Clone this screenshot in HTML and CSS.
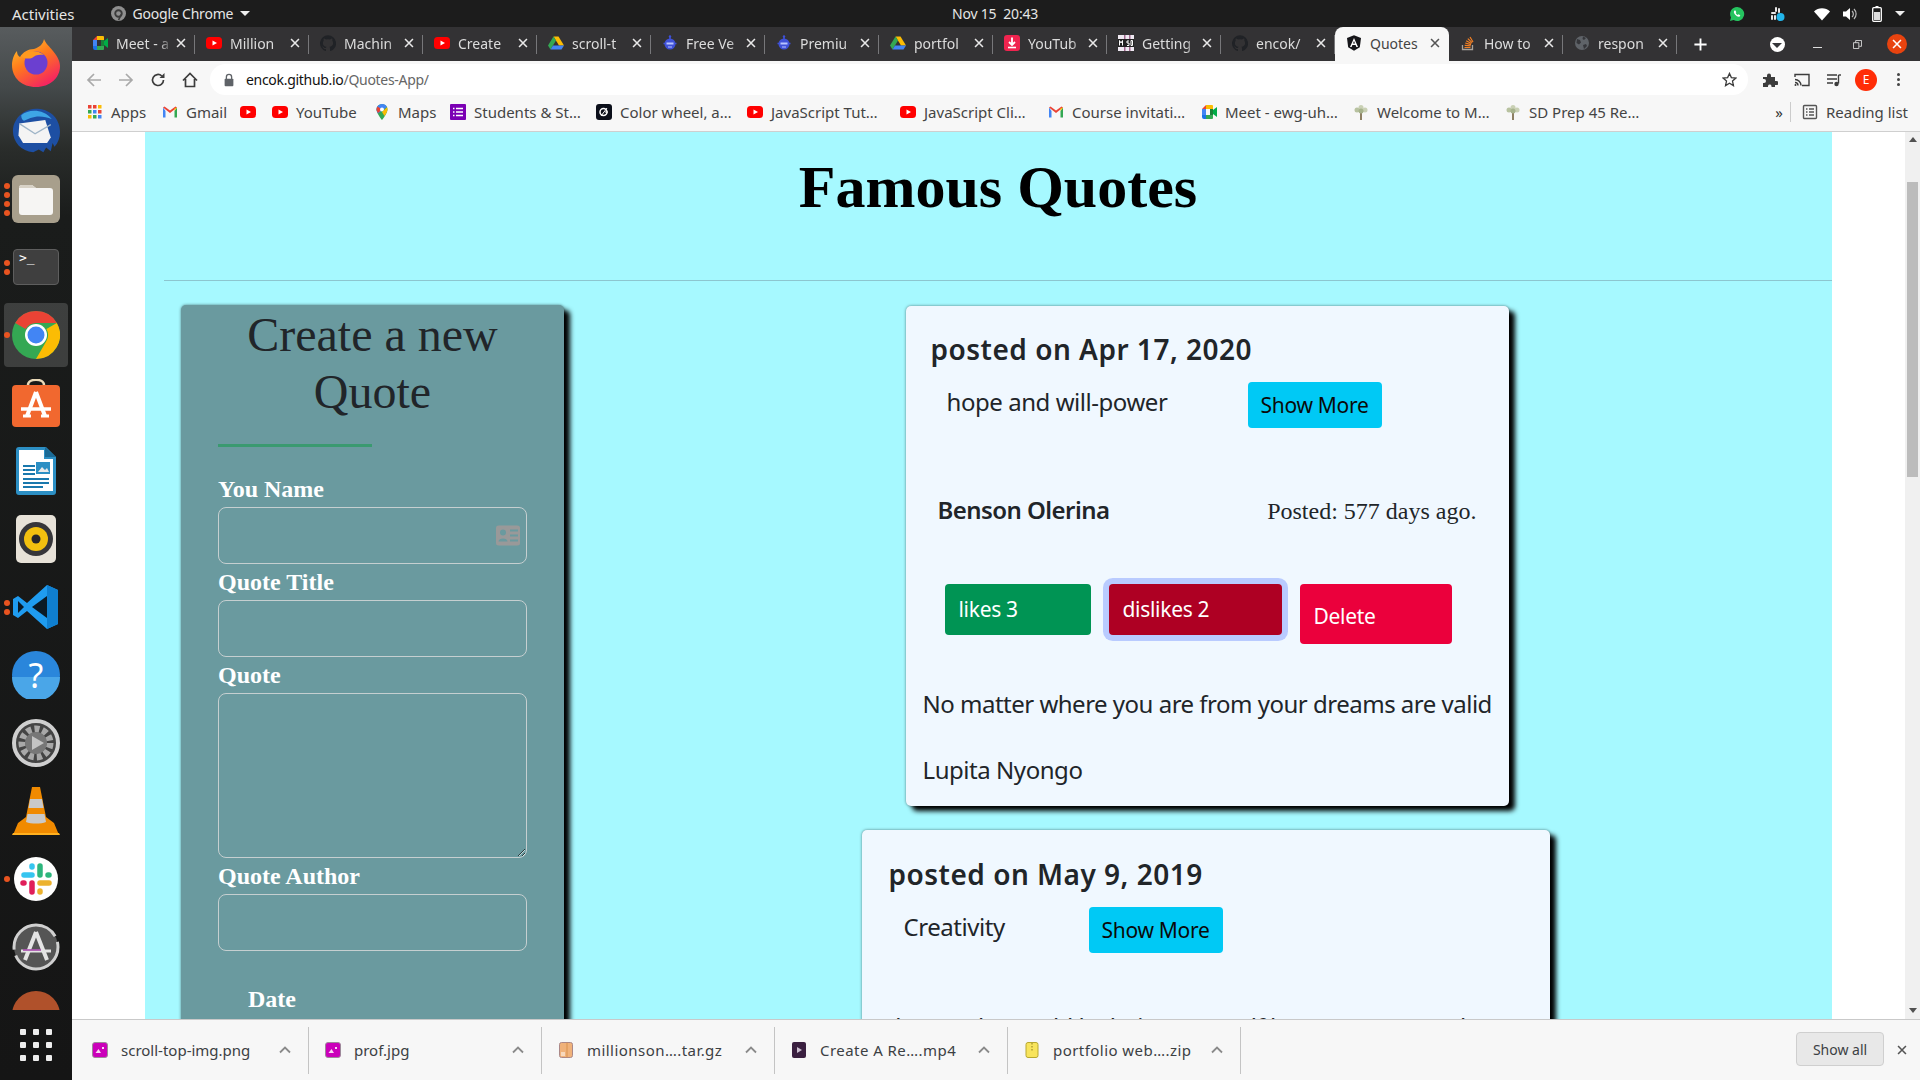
FILE: index.html
```html
<!doctype html>
<html lang="en">
<head>
    <meta charset="UTF-8">
    <title>Quotes</title>
    <link rel="stylesheet" href="styles.css">
</head>
<body>
<svg class="defs" width="0" height="0">
    <symbol id="i-x" viewBox="0 0 16 16"><path d="M3.5 3.5l9 9M12.5 3.5l-9 9" fill="none" stroke="currentColor" stroke-width="1.8"/></symbol>
    <symbol id="i-yt" viewBox="0 0 16 16"><rect x="0" y="2" width="16" height="12" rx="3.5" fill="#f00"/><path d="M6.5 5.5v5L11 8z" fill="#fff"/></symbol>
    <symbol id="i-meet" viewBox="0 0 16 16"><path d="M1 5l4-4v4z" fill="#ea4335"/><path d="M1 5h4v6H1z" fill="#4285f4"/><path d="M1 11h4v4H3a2 2 0 0 1-2-2z" fill="#1a73e8"/><path d="M5 1h6a1 1 0 0 1 1 1v3H5z" fill="#fbbc04"/><path d="M5 11h7v3a1 1 0 0 1-1 1H5z" fill="#34a853"/><path d="M12 6l4-3v10l-4-3z" fill="#00ac47"/><path d="M9 5h3v6H9z" fill="#188038"/></symbol>
    <symbol id="i-gh" viewBox="0 0 16 16"><path d="M8 .3a8 8 0 0 0-2.5 15.6c.4.1.5-.2.5-.4v-1.4c-2.2.5-2.7-1-2.7-1-.4-.9-.9-1.200-.9-1.200-.7-.5.100-.5.100-.5.800.100 1.200.8 1.200.8.700 1.200 1.900.9 2.300.7.100-.5.300-.9.500-1.100-1.800-.2-3.600-.9-3.600-4 0-.9.300-1.600.8-2.100-.1-.2-.4-1 .1-2.100 0 0 .7-.2 2.200.8a7.600 7.600 0 0 1 4 0c1.500-1 2.200-.8 2.200-.8.400 1.100.200 1.900.100 2.100.5.500.8 1.200.8 2.100 0 3.100-1.900 3.800-3.700 4 .3.200.6.700.6 1.500v2.200c0 .2.100.5.600.4A8 8 0 0 0 8 .3z" fill="#202226"/></symbol>
    <symbol id="i-drive" viewBox="0 0 16 16"><path d="M5.500 1.500h5L16 10.500h-5z" fill="#fbbc04"/><path d="M5.500 1.500L0 10.500l2.500 4L8 5.500z" fill="#34a853"/><path d="M2.500 14.500h11l2.500-4H5z" fill="#4285f4"/></symbol>
    <symbol id="i-bot" viewBox="0 0 16 16"><circle cx="8" cy="9" r="5.500" fill="#3f51d8"/><path d="M8 1v3M1.500 8.500h1.500M13 8.500h1.500" stroke="#3f51d8" stroke-width="1.500"/><circle cx="8" cy="1.500" r="1.200" fill="#3f51d8"/><path d="M4.500 7.500h7v2h-7z" fill="#b9c4ff"/><path d="M6 12h4" stroke="#b9c4ff"/></symbol>
    <symbol id="i-dl" viewBox="0 0 16 16"><rect width="16" height="16" rx="3" fill="#f0244f"/><path d="M8 2.500v7M5 7l3 3 3-3" fill="none" stroke="#fff" stroke-width="1.800"/><path d="M4 12.500h8" stroke="#fff" stroke-width="1.600"/></symbol>
    <symbol id="i-msd" viewBox="0 0 16 16"><rect width="16" height="16" fill="#efe9f2"/><path d="M6 0h1.500v16H6zM11 0h1.500v16H11z" fill="#a2688e"/><path d="M0 4h16v8H0z" fill="#222"/><path d="M1.500 10.500V5.500L3 8l1.500-2.500v5M11 6H9v2h2v2.500H9M13 5.500h1.500v5H13z" fill="none" stroke="#fff"/></symbol>
    <symbol id="i-ng" viewBox="0 0 16 16"><path d="M8 .3L1 3l1.200 9.200L8 15.700l5.800-3.500L15 3z" fill="#16161a"/><path d="M8 3L4 12h1.600l.8-2.100h3.200l.8 2.100H12zM7 8.500l1-2.500 1 2.500z" fill="#fff"/></symbol>
    <symbol id="i-so" viewBox="0 0 16 16"><path d="M2.500 10v4.500h10V10" fill="none" stroke="#a8a29a" stroke-width="1.300"/><path d="M4.500 12.500h6M4.700 10.300l6 .5M5.200 8l5.800 1.600M6.200 5.700l5.200 2.900M7.800 3.600l4.300 4M10 2l3 5" stroke="#f48024" stroke-width="1.200" fill="none"/></symbol>
    <symbol id="i-globe" viewBox="0 0 16 16"><circle cx="8" cy="8" r="7" fill="#5f6368"/><path d="M3 4l3 1 1 2.500-2 2-2.500-1.500zM9 10l3-1 1 2-3 3zM9 1.500l3 1.500-2 2-1.500-1z" fill="#35363a"/></symbol>
    <symbol id="i-gm" viewBox="0 0 16 16"><path d="M1 3.500v10h2.500V7z" fill="#4285f4"/><path d="M12.500 7v6.500H15v-10z" fill="#34a853"/><path d="M1 3.500L8 9l7-5.500-1.500-1L8 6.500 2.500 2.500z" fill="#ea4335"/><path d="M12.500 4.200L15 3.500 12.500 7z" fill="#fbbc04"/></symbol>
    <symbol id="i-tree" viewBox="0 0 16 16"><path d="M7 8h2v8H7z" fill="#8d7f63"/><circle cx="8" cy="3.500" r="2.500" fill="#c9d0b4"/><circle cx="4" cy="6" r="2.500" fill="#b8c2a0"/><circle cx="12" cy="6" r="2.500" fill="#c9d0b4"/><circle cx="8" cy="7" r="2.500" fill="#a6b28c"/></symbol>
    <symbol id="i-img" viewBox="0 0 16 16"><rect x=".5" y=".5" width="15" height="15" rx="2.500" fill="#cb00ba" stroke="#9d8a9a"/><path d="M3.500 11l3-4 2.500 4zM10 5h2v2h-2z" fill="#fbd6f5"/></symbol>
    <symbol id="i-caret" viewBox="0 0 16 16"><path d="M3 10.500L8 5.500l5 5" fill="none" stroke="#8a8a8a" stroke-width="1.800"/></symbol>
</svg>

<header class="top-bar">
    <span class="activities">Activities</span>
    <span class="app-menu">
        <svg class="app-menu-ico" viewBox="0 0 16 16"><circle cx="8" cy="8" r="8" fill="#8f8f8f"/><circle cx="8" cy="8" r="3.500" fill="none" stroke="#3a3a3a" stroke-width="2"/><path d="M11 9l-3 6" stroke="#3a3a3a" stroke-width="1.600"/></svg>
        Google Chrome
        <i class="down-caret"></i>
    </span>
    <span class="clock">Nov 15&nbsp; 20:43</span>
    <div class="tray">
        <svg class="tray-whatsapp" viewBox="0 0 16 16"><path d="M8 1a7 7 0 0 0-6 10.500L1 15l3.600-1A7 7 0 1 0 8 1z" fill="#25c35f"/><path d="M5.500 4.500c-1 1-.8 2.600.7 4.300s3.200 2.500 4.500 1.700l.6-1.200-1.800-1-.8.700c-.9-.4-1.600-1.200-2-2l.6-.8-.8-1.800z" fill="#fff"/></svg>
        <svg class="tray-slack" viewBox="0 0 16 16"><g fill="#e8e8e8"><rect x="2" y="6" width="5" height="2" rx="1"/><rect x="6" y="1" width="2" height="5" rx="1"/><rect x="9" y="2" width="2" height="5" rx="1"/><rect x="2" y="9" width="2" height="5" rx="1"/><rect x="5" y="9" width="2" height="5" rx="1"/></g><circle cx="11.500" cy="11" r="4" fill="#22b5ea"/></svg>
        <svg class="tray-wifi" viewBox="0 0 16 16"><path d="M0 5.500a11.500 11.500 0 0 1 16 0L8 14.500z" fill="#fff"/></svg>
        <svg class="tray-vol" viewBox="0 0 16 16"><path d="M1 5.500h3L8 2v12l-4-3.500H1z" fill="#fff"/><path d="M10 5a4 4 0 0 1 0 6M12 3a7 7 0 0 1 0 10" fill="none" stroke="#bbb" stroke-width="1.200"/></svg>
        <svg class="tray-bat" viewBox="0 0 10 16"><path d="M3.500 0h3v1.500h-3z" fill="#fff"/><rect x=".7" y="1.700" width="8.600" height="13.600" rx="1" fill="none" stroke="#fff" stroke-width="1.300"/><rect x="2" y="6" width="6" height="8" fill="#ddd"/></svg>
        <i class="down-caret"></i>
    </div>
</header>

<div class="desktop">
    <nav class="dock">
        <div class="dock-list">
            <div class="dock-item">
                <svg class="dock-ico" viewBox="0 0 48 48"><defs><linearGradient id="ff" x1="0" y1="0" x2=".6" y2="1"><stop offset="0" stop-color="#ffd12e"/><stop offset=".5" stop-color="#ff7a1c"/><stop offset="1" stop-color="#f5265f"/></linearGradient></defs><path d="M32 0c2 5 5 7 9 12 5 6 7 11 7 15 0 12-10 21-24 21S0 39 0 26c0-5 2-11 5-14 0 3 1 5 3 6 3-5 8-8 14-8 6-2 9-5 10-10z" fill="url(#ff)"/><circle cx="24" cy="24" r="11.500" fill="#6b3fd0"/><path d="M9 17c5-5 15-7 23-1-5-1-9 0-12 3-3 1-8 1-11-2z" fill="#ff9a1f"/></svg>
            </div>
            <div class="dock-item">
                <svg class="dock-ico" viewBox="0 0 52 48"><path d="M28 0c14 1 24 11 24 25 0 6-2 12-6 16l-2-4-2 9-5-4-3 5-5-3-6 3c-13-1-22-11-22-23 0-4 1-8 3-11C8 5 18-1 28 0z" fill="#1d4fa3"/><path d="M10 7c8-7 24-7 33 4-7-3-16-4-23-1l-7 3c-2-1-3-3-3-6z" fill="#3ea6e6"/><path d="M8 16l28-4 6 19-4 6-26 0-5-8z" fill="#f4f4f4"/><path d="M8 16l17 11 17-10" fill="none" stroke="#9fb5c8" stroke-width="1.500"/></svg>
            </div>
            <div class="dock-item">
                <div class="pips pips-files"><i></i><i></i><i></i><i></i></div>
                <svg class="dock-ico" viewBox="0 0 48 48"><rect width="48" height="48" rx="6" fill="#a89f8c"/><path d="M7 13a3 3 0 0 1 3-3h10l4 3h14a3 3 0 0 1 3 3v21a3 3 0 0 1-3 3H10a3 3 0 0 1-3-3z" fill="#f6f5f3"/><path d="M7 13a3 3 0 0 1 3-3h10l4 3z" fill="#d8d2c6"/></svg>
            </div>
            <div class="dock-item">
                <div class="pips pips-term"><i></i><i></i></div>
                <div class="term-ico">&gt;_</div>
            </div>
            <div class="dock-item dock-item-on">
                <div class="pips pips-chrome"><i></i></div>
                <svg class="dock-ico" viewBox="0 0 48 48"><circle cx="24" cy="24" r="24" fill="#34a853"/><path d="M24 0a24 24 0 0 1 20.800 12H24a12 12 0 0 0-10.400 6L3.200 12A24 24 0 0 1 24 0z" fill="#ea4335"/><path d="M44.800 12A24 24 0 0 1 24 48l10.400-18a12 12 0 0 0 0-12z" fill="#fbbc04"/><circle cx="24" cy="24" r="11" fill="#fff"/><circle cx="24" cy="24" r="8.500" fill="#4285f4"/></svg>
            </div>
            <div class="dock-item">
                <svg class="dock-ico" viewBox="0 0 48 48"><path d="M0 10a4 4 0 0 1 4-4h40a4 4 0 0 1 4 4v34a4 4 0 0 1-4 4H4a4 4 0 0 1-4-4z" fill="#f1682f"/><path d="M16 6c0-7 16-7 16 0" fill="none" stroke="#e9d9b8" stroke-width="2.500"/><path d="M24 13l-9 24M24 13l9 24" stroke="#fff" stroke-width="4" fill="none"/><path d="M9 30h30" stroke="#fff" stroke-width="3.500"/><path d="M11 37h8M29 37h8" stroke="#fff" stroke-width="3"/></svg>
            </div>
            <div class="dock-item">
                <svg class="dock-ico-doc" viewBox="0 0 40 48"><path d="M3 0h27l10 10v35a3 3 0 0 1-3 3H3a3 3 0 0 1-3-3V3a3 3 0 0 1 3-3z" fill="#2c8fc4"/><path d="M3 3h25v9h9v32H3z" fill="#fff"/><path d="M29 0l11 10-11 0z" fill="#1a6a96"/><path d="M7 19h12M7 23h12M7 27h12M7 32h26M7 36h26M7 40h20" stroke="#1a78ad" stroke-width="2"/><rect x="20" y="15" width="14" height="12" fill="#2c8fc4"/><path d="M22 25l4-5 3 3 2-2 2 4z" fill="#e9e9e9"/></svg>
            </div>
            <div class="dock-item">
                <svg class="dock-ico-doc" viewBox="0 0 40 48"><rect width="40" height="48" rx="5" fill="#e7e2d8"/><circle cx="20" cy="24" r="17" fill="#36363a"/><circle cx="20" cy="24" r="12" fill="#f2c00f"/><circle cx="20" cy="24" r="4.500" fill="#26262a"/></svg>
            </div>
            <div class="dock-item">
                <div class="pips pips-term"><i></i><i></i></div>
                <svg class="dock-ico" viewBox="0 0 48 48"><path d="M35 2l11 5v34l-11 5-20-18-9 7-5-3V16l5-3 9 7z" fill="#1f9cf0"/><path d="M35 13L20 24l15 11z" fill="#0b1a26"/><path d="M6 18v12l6-6z" fill="#0b1a26"/><path d="M35 2l11 5v34l-11 5z" fill="#0f7fd0"/></svg>
            </div>
            <div class="dock-item">
                <svg class="dock-ico" viewBox="0 0 48 48"><circle cx="24" cy="24" r="24" fill="#2a86db"/><path d="M0 26h48a24 24 0 0 1-48 0z" fill="#4aa6e8"/><text class="help-mark" x="24" y="37" text-anchor="middle">?</text></svg>
            </div>
            <div class="dock-item">
                <svg class="dock-ico" viewBox="0 0 48 48"><circle cx="24" cy="24" r="22" fill="#444" stroke="#cfcfcf" stroke-width="4"/><circle cx="24" cy="24" r="14" fill="none" stroke="#a8a8a8" stroke-width="7" stroke-dasharray="5 3"/><circle cx="24" cy="24" r="11" fill="#777"/><path d="M20 17l12 7-12 7z" fill="#c4c4c4"/></svg>
            </div>
            <div class="dock-item">
                <svg class="dock-ico" viewBox="0 0 48 48"><path d="M1 48l5-12 8-6 6-30h8l6 30 8 6 5 12z" fill="#f08a00"/><path d="M18 12h12l1.500 9h-15zM15.500 27h17l1.500 8c-5 2-15 2-20 0z" fill="#c9c9c9"/><path d="M1 46h46l1 2H0z" fill="#ffb01f"/></svg>
            </div>
            <div class="dock-item">
                <div class="pips pips-chrome"><i></i></div>
                <svg class="dock-ico" viewBox="0 0 48 48"><circle cx="24" cy="24" r="22" fill="#fff"/><g stroke-width="5.500" stroke-linecap="round"><path d="M12 20h8M20 11v1" stroke="#36c5f0"/><path d="M28 11v9M36 20h1" stroke="#2eb67d"/><path d="M28 28h9M28 37v-1" stroke="#ecb22e"/><path d="M20 28v9M11 28h1" stroke="#e01e5a"/></g></svg>
            </div>
            <div class="dock-item">
                <svg class="dock-ico" viewBox="0 0 48 48"><circle cx="24" cy="24" r="22" fill="#555" stroke="#d0d0d0" stroke-width="3" stroke-dasharray="60 6"/><path d="M24 9l-11 28M24 9l11 28" stroke="#e4e4e4" stroke-width="4" fill="none"/><path d="M9 28h30" stroke="#e4e4e4" stroke-width="3"/><path d="M11 27h18" stroke="#a23ea8" stroke-width="1.500"/></svg>
            </div>
            <div class="dock-item">
                <svg class="dock-ico" viewBox="0 0 48 48"><circle cx="24" cy="24" r="24" fill="#b0512b"/></svg>
            </div>
        </div>
        <div class="show-apps"><i></i><i></i><i></i><i></i><i></i><i></i><i></i><i></i><i></i></div>
    </nav>

    <div class="chrome">
        <div class="tab-bar">
            <div class="tab"><svg class="ico16"><use href="#i-meet"/></svg><span class="tab-title">Meet - a</span><svg class="tab-x"><use href="#i-x"/></svg></div>
            <div class="tab"><svg class="ico16"><use href="#i-yt"/></svg><span class="tab-title">Million</span><svg class="tab-x"><use href="#i-x"/></svg></div>
            <div class="tab"><svg class="ico16"><use href="#i-gh"/></svg><span class="tab-title">Machin</span><svg class="tab-x"><use href="#i-x"/></svg></div>
            <div class="tab"><svg class="ico16"><use href="#i-yt"/></svg><span class="tab-title">Create</span><svg class="tab-x"><use href="#i-x"/></svg></div>
            <div class="tab"><svg class="ico16"><use href="#i-drive"/></svg><span class="tab-title">scroll-t</span><svg class="tab-x"><use href="#i-x"/></svg></div>
            <div class="tab"><svg class="ico16"><use href="#i-bot"/></svg><span class="tab-title">Free Ve</span><svg class="tab-x"><use href="#i-x"/></svg></div>
            <div class="tab"><svg class="ico16"><use href="#i-bot"/></svg><span class="tab-title">Premiu</span><svg class="tab-x"><use href="#i-x"/></svg></div>
            <div class="tab"><svg class="ico16"><use href="#i-drive"/></svg><span class="tab-title">portfol</span><svg class="tab-x"><use href="#i-x"/></svg></div>
            <div class="tab"><svg class="ico16"><use href="#i-dl"/></svg><span class="tab-title">YouTub</span><svg class="tab-x"><use href="#i-x"/></svg></div>
            <div class="tab"><svg class="ico16"><use href="#i-msd"/></svg><span class="tab-title">Getting</span><svg class="tab-x"><use href="#i-x"/></svg></div>
            <div class="tab"><svg class="ico16"><use href="#i-gh"/></svg><span class="tab-title">encok/</span><svg class="tab-x"><use href="#i-x"/></svg></div>
            <div class="tab tab-on"><svg class="ico16"><use href="#i-ng"/></svg><span class="tab-title">Quotes</span><svg class="tab-x"><use href="#i-x"/></svg></div>
            <div class="tab"><svg class="ico16"><use href="#i-so"/></svg><span class="tab-title">How to</span><svg class="tab-x"><use href="#i-x"/></svg></div>
            <div class="tab"><svg class="ico16"><use href="#i-globe"/></svg><span class="tab-title">respon</span><svg class="tab-x"><use href="#i-x"/></svg></div>
            <div class="new-tab"><svg viewBox="0 0 16 16"><path d="M8 1.500v13M1.500 8h13" stroke="#fff" stroke-width="2"/></svg></div>
            <div class="win-ctrls">
                <div class="win-btn"><span class="tab-search"><i class="down-caret down-caret-dark"></i></span></div>
                <div class="win-btn"><i class="win-min"></i></div>
                <div class="win-btn"><svg class="win-restore" viewBox="0 0 10 10"><path d="M.5 3h6v6.500h-6zM3 3V.5h6.500V7H7" fill="none" stroke="#ddd"/></svg></div>
                <div class="win-btn"><span class="win-close"><svg class="tab-x win-close-x"><use href="#i-x"/></svg></span></div>
            </div>
        </div>

        <div class="toolbar">
            <div class="tool-btn"><svg viewBox="0 0 16 16"><path d="M15 8H2M8 2L2 8l6 6" fill="none" stroke="#a9a9a9" stroke-width="1.700"/></svg></div>
            <div class="tool-btn"><svg viewBox="0 0 16 16"><path d="M1 8h13M8 2l6 6-6 6" fill="none" stroke="#a9a9a9" stroke-width="1.700"/></svg></div>
            <div class="tool-btn"><svg viewBox="0 0 16 16"><path d="M13.500 8A5.500 5.500 0 1 1 11.800 4" fill="none" stroke="#3c3c3c" stroke-width="1.700"/><path d="M14.500 1v5h-5z" fill="#3c3c3c"/></svg></div>
            <div class="tool-btn"><svg viewBox="0 0 16 16"><path d="M1 8.500L8 1.500l7 7M3.500 7v7.500h9V7" fill="none" stroke="#3c3c3c" stroke-width="1.700"/></svg></div>
            <div class="url-pill">
                <svg class="lock" viewBox="0 0 12 16"><path d="M3 7V4.500a3 3 0 0 1 6 0V7" fill="none" stroke="#5f6368" stroke-width="1.500"/><rect x="1" y="6.500" width="10" height="8.500" rx="1" fill="#5f6368"/></svg>
                <span class="url-text"><b>encok.github.io</b>/Quotes-App/</span>
                <svg class="star" viewBox="0 0 16 16"><path d="M8 1.500l2 4.500 4.800.5-3.600 3.200 1 4.800L8 12l-4.200 2.500 1-4.800L1.200 6.500 6 6z" fill="none" stroke="#3c3c3c" stroke-width="1.400"/></svg>
            </div>
            <div class="tool-right">
                <div class="tool-btn"><svg viewBox="0 0 16 16"><path d="M1 5h4V3.500a2 2 0 0 1 4 0V5h4v4h1.500a2 2 0 0 1 0 4H13v2H9.500v-1a1.800 1.800 0 0 0-3.500 0v1H1v-4h1a2 2 0 0 0 0-4H1z" fill="#3c3c3c"/></svg></div>
                <div class="tool-btn"><svg viewBox="0 0 16 16"><path d="M1 5V2.500h14v11H8" fill="none" stroke="#3c3c3c" stroke-width="1.400"/><path d="M1 7.500a6 6 0 0 1 6 6M1 10.500a3 3 0 0 1 3 3" fill="none" stroke="#3c3c3c" stroke-width="1.400"/><circle cx="1.500" cy="13" r="1" fill="#3c3c3c"/></svg></div>
                <div class="tool-btn"><svg viewBox="0 0 16 16"><path d="M1 3h10M1 7h10M1 11h6M12.500 3v8.500" fill="none" stroke="#3c3c3c" stroke-width="1.400"/><circle cx="10.500" cy="12" r="2.200" fill="#3c3c3c"/><path d="M12.500 3H15" stroke="#3c3c3c" stroke-width="1.400"/></svg></div>
                <div class="tool-btn"><span class="avatar">E</span></div>
                <div class="tool-btn"><span class="kebab"><i></i><i></i><i></i></span></div>
            </div>
        </div>

        <div class="bookmarks">
            <div class="bm"><svg class="ico16 bm-ico" viewBox="0 0 16 16"><g><rect x="1" y="1" width="3.500" height="3.500" fill="#ea4335"/><rect x="6" y="1" width="3.500" height="3.500" fill="#ea4335"/><rect x="11" y="1" width="3.500" height="3.500" fill="#fbbc04"/><rect x="1" y="6" width="3.500" height="3.500" fill="#34a853"/><rect x="6" y="6" width="3.500" height="3.500" fill="#4285f4"/><rect x="11" y="6" width="3.500" height="3.500" fill="#ea4335"/><rect x="1" y="11" width="3.500" height="3.500" fill="#fbbc04"/><rect x="6" y="11" width="3.500" height="3.500" fill="#34a853"/><rect x="11" y="11" width="3.500" height="3.500" fill="#4285f4"/></g></svg><span>Apps</span></div>
            <div class="bm"><svg class="ico16"><use href="#i-gm"/></svg><span>Gmail</span></div>
            <div class="bm"><svg class="ico16"><use href="#i-yt"/></svg></div>
            <div class="bm"><svg class="ico16"><use href="#i-yt"/></svg><span>YouTube</span></div>
            <div class="bm"><svg class="ico16" viewBox="0 0 16 16"><path d="M8 0a5.500 5.500 0 0 0-5.500 5.500C2.500 9.500 8 16 8 16s5.500-6.500 5.500-10.500A5.500 5.500 0 0 0 8 0z" fill="#34a853"/><path d="M8 0a5.500 5.500 0 0 1 5 3L4 9.500c-1-1.500-1.500-3-1.500-4A5.500 5.500 0 0 1 8 0z" fill="#4285f4"/><path d="M3.500 2.500L8 5.500 4 9c-1-1.500-1.500-2.500-1.500-3.500a5 5 0 0 1 1-3z" fill="#ea4335"/><circle cx="8" cy="5.500" r="2" fill="#fff"/><path d="M13 3.300a5.500 5.500 0 0 1 .5 2.200c0 2-1.500 4.500-3 6.500L8 8z" fill="#fbbc04"/></svg><span>Maps</span></div>
            <div class="bm"><svg class="ico16" viewBox="0 0 16 16"><rect width="16" height="16" rx="1" fill="#7b00b4"/><path d="M6 4.500h7M6 8h7M6 11.500h7M3 4.500h1.500M3 8h1.500M3 11.500h1.500" stroke="#fff" stroke-width="1.500"/></svg><span>Students &amp; St…</span></div>
            <div class="bm"><svg class="ico16" viewBox="0 0 16 16"><rect width="16" height="16" rx="3" fill="#0b0f1a"/><circle cx="7.500" cy="8" r="3.500" fill="none" stroke="#fff" stroke-width="1.500"/><path d="M5 12l6-8M9 8h3" stroke="#fff"/></svg><span>Color wheel, a…</span></div>
            <div class="bm"><svg class="ico16"><use href="#i-yt"/></svg><span>JavaScript Tut…</span></div>
            <div class="bm"><svg class="ico16"><use href="#i-yt"/></svg><span>JavaScript Cli…</span></div>
            <div class="bm"><svg class="ico16"><use href="#i-gm"/></svg><span>Course invitati…</span></div>
            <div class="bm"><svg class="ico16"><use href="#i-meet"/></svg><span>Meet - ewg-uh…</span></div>
            <div class="bm"><svg class="ico16"><use href="#i-tree"/></svg><span>Welcome to M…</span></div>
            <div class="bm"><svg class="ico16"><use href="#i-tree"/></svg><span>SD Prep 45 Re…</span></div>
            <div class="bm-more">»</div>
            <div class="bm bm-reading"><svg class="ico16" viewBox="0 0 16 16"><rect x="1.500" y="1.500" width="13" height="13" rx="1" fill="none" stroke="#555" stroke-width="1.400"/><path d="M4 5h1.500M7 5h5M4 8h1.500M7 8h5M4 11h1.500M7 11h5" stroke="#555" stroke-width="1.300"/></svg><span>Reading list</span></div>
        </div>

        <div class="page">
            <div class="viewport">
                <main class="panel">
                    <h1 class="title">Famous Quotes</h1>
                    <hr class="rule">
                    <div class="columns">
                        <aside class="new-quote">
                            <h2 class="new-quote-head">Create a new Quote</h2>
                            <div class="green-line"></div>
                            <form>
                                <label class="field-label">You Name</label>
                                <div class="input-wrap">
                                    <input class="field" type="text">
                                    <svg class="contact-ico" viewBox="0 0 24 20"><rect width="24" height="20" rx="2.500" fill="#999"/><circle cx="7" cy="7" r="3" fill="#6a9a9f"/><path d="M2.500 16c0-4 9-4 9 0z" fill="#6a9a9f"/><path d="M14 5h8M14 10h8M14 15h8" stroke="#6a9a9f" stroke-width="1.800"/></svg>
                                </div>
                                <label class="field-label">Quote Title</label>
                                <input class="field" type="text">
                                <label class="field-label">Quote</label>
                                <textarea class="field field-area"></textarea>
                                <label class="field-label">Quote Author</label>
                                <input class="field" type="text">
                                <div class="date-group">
                                    <label class="field-label">Date</label>
                                    <input class="date-field" type="text">
                                </div>
                            </form>
                        </aside>
                        <section class="quotes">
                            <article class="card card-first">
                                <h3 class="card-date">posted on Apr 17, 2020</h3>
                                <div class="topic-row">
                                    <span class="topic topic-long">hope and will-power</span>
                                    <button class="btn-more">Show More</button>
                                </div>
                                <div class="byline">
                                    <span class="byline-name">Benson Olerina</span>
                                    <span class="byline-age">Posted: 577 days ago.</span>
                                </div>
                                <div class="actions">
                                    <button class="btn-act btn-like">likes 3</button>
                                    <button class="btn-act btn-dislike">dislikes 2</button>
                                    <button class="btn-act btn-delete">Delete</button>
                                </div>
                                <p class="quote-text">No matter where you are from your dreams are valid</p>
                                <p class="quote-author">Lupita Nyongo</p>
                            </article>
                            <article class="card card-second">
                                <h3 class="card-date">posted on May 9, 2019</h3>
                                <div class="topic-row">
                                    <span class="topic topic-short">Creativity</span>
                                    <button class="btn-more">Show More</button>
                                </div>
                                <p class="quote-text quote-text-second">Change the world by being yourself because you are the</p>
                            </article>
                        </section>
                    </div>
                </main>
            </div>
            <div class="scrollbar">
                <i class="sb-up"></i>
                <div class="sb-track"><div class="sb-thumb"></div></div>
                <i class="sb-down"></i>
            </div>
        </div>

        <footer class="downloads">
            <div class="dl"><svg class="ico16"><use href="#i-img"/></svg><span class="dl-name">scroll-top-img.png</span><svg class="dl-caret"><use href="#i-caret"/></svg></div>
            <div class="dl"><svg class="ico16"><use href="#i-img"/></svg><span class="dl-name">prof.jpg</span><svg class="dl-caret"><use href="#i-caret"/></svg></div>
            <div class="dl"><svg class="ico16" viewBox="0 0 16 16"><rect x="1.500" y=".5" width="13" height="15" rx="2" fill="#f0b27a" stroke="#a88"/><path d="M9 .5v15" stroke="#d8924f"/><path d="M3 11h4M3 13h4" stroke="#fff"/></svg><span class="dl-name dl-name-wide">millionson….tar.gz</span><svg class="dl-caret"><use href="#i-caret"/></svg></div>
            <div class="dl"><svg class="ico16" viewBox="0 0 16 16"><rect x="1" y="0" width="14" height="16" rx="2" fill="#3b2040"/><path d="M6 5l5 3-5 3z" fill="#cdbfd0"/></svg><span class="dl-name dl-name-wide">Create A Re….mp4</span><svg class="dl-caret"><use href="#i-caret"/></svg></div>
            <div class="dl"><svg class="ico16" viewBox="0 0 16 16"><rect x="2" y=".5" width="12" height="15" rx="2" fill="#f8e45c" stroke="#b8a830"/><path d="M8 1v9" stroke="#8a7a20" stroke-dasharray="1.500 1.500"/></svg><span class="dl-name dl-name-wide">portfolio web….zip</span><svg class="dl-caret"><use href="#i-caret"/></svg></div>
            <button class="show-all">Show all</button>
            <svg class="dl-close"><use href="#i-x"/></svg>
        </footer>
    </div>
</div>
</body>
</html>
```

FILE: styles.css
```css
html , body
{
    margin : 0px ;
    padding : 0px ;
    width : 1920px ;
    height : 1080px ;
    overflow : hidden ;
    background : #161616 ;
    font-family : "Noto Sans" , sans-serif ;
}
.defs
{
    display : block ;
    position : absolute ;
}
i
{
    display : block ;
}

/* ubuntu top bar */
.top-bar
{
    height : 27px ;
    background : #1c1c1c ;
    color : #e6e6e6 ;
    font-size : 14px ;
    letter-spacing : -0.2px ;
    display : flex ;
    align-items : center ;
    position : relative ;
}
.activities
{
    margin-left : 12px ;
    font-size : 15px ;
    letter-spacing : 0 ;
}
.app-menu
{
    margin-left : 36px ;
    display : flex ;
    align-items : center ;
    gap : 7px ;
}
.app-menu-ico
{
    width : 15px ;
    height : 15px ;
}
.down-caret
{
    width : 0 ;
    height : 0 ;
    border-left : 5px solid transparent ;
    border-right : 5px solid transparent ;
    border-top : 5px solid #eee ;
}
.down-caret-dark
{
    border-top-color : #35363a ;
    margin-top : 2px ;
}
.clock
{
    position : absolute ;
    left : 952px ;
    white-space : nowrap ;
}
.tray
{
    margin-left : auto ;
    display : flex ;
    align-items : center ;
    padding-right : 15px ;
}
.tray svg
{
    height : 16px ;
    width : 16px ;
}
.tray-whatsapp
{
    margin-right : 24px ;
}
.tray-slack
{
    margin-right : 29px ;
}
.tray-wifi
{
    margin-right : 12px ;
}
.tray-vol
{
    margin-right : 14px ;
}
.tray .tray-bat
{
    width : 10px ;
    margin-right : 13px ;
}

.desktop
{
    display : flex ;
    height : 1053px ;
}

/* dock */
.dock
{
    width : 72px ;
    flex : none ;
    display : flex ;
    flex-direction : column ;
    background : linear-gradient(#585c5e 0px , #44494a 60px , #2a2d2b 120px , #1a1c1b 190px , #151515 100%) ;
}
.dock-list
{
    height : 983px ;
    overflow : hidden ;
    padding-top : 2px ;
    box-sizing : border-box ;
}
.dock-item
{
    height : 68px ;
    display : flex ;
    align-items : center ;
    justify-content : center ;
    position : relative ;
    margin : 0 4px ;
}
.dock-item-on
{
    background : rgba(255 , 255 , 255 , 0.16) ;
    border-radius : 4px ;
    margin-top : 2px ;
    margin-bottom : 2px ;
    height : 64px ;
}
.dock-ico
{
    width : 48px ;
    height : 48px ;
}
.dock-ico-doc
{
    width : 40px ;
    height : 48px ;
}
.term-ico
{
    width : 46px ;
    height : 36px ;
    background : #3f3f3f ;
    border : 1px solid #5e5e5e ;
    border-radius : 4px ;
    color : #fff ;
    font : 13px "DejaVu Sans Mono" , monospace ;
    padding-left : 5px ;
    box-sizing : border-box ;
}
.help-mark
{
    font : 34px "Noto Sans" , sans-serif ;
    fill : #fff ;
}
.pips
{
    position : absolute ;
    left : 0px ;
    top : 0 ;
    bottom : 0 ;
    display : flex ;
    flex-direction : column ;
    justify-content : center ;
    gap : 3px ;
}
.pips i
{
    width : 6px ;
    height : 6px ;
    border-radius : 50% ;
    background : #e95420 ;
}
.pips-chrome
{
    left : 0px ;
}
.show-apps
{
    flex : 1 ;
    display : grid ;
    grid-template-columns : repeat(3 , 6px) ;
    gap : 7px ;
    justify-content : center ;
    align-content : center ;
}
.show-apps i
{
    width : 6px ;
    height : 6px ;
    background : #eee ;
    border-radius : 1px ;
}

/* chrome window */
.chrome
{
    flex : 1 ;
    min-width : 0 ;
    display : flex ;
    flex-direction : column ;
}
.ico16
{
    width : 16px ;
    height : 16px ;
    flex : none ;
}
.tab-bar
{
    height : 34px ;
    background : #333234 ;
    display : flex ;
    padding-left : 9px ;
}
.tab
{
    width : 114px ;
    flex : none ;
    display : flex ;
    align-items : center ;
    padding-left : 11px ;
    padding-bottom : 2px ;
    box-sizing : border-box ;
    color : #dcdcdc ;
    font-size : 14px ;
    position : relative ;
}
.tab:after
{
    content : "" ;
    position : absolute ;
    right : 0 ;
    top : 8px ;
    bottom : 7px ;
    width : 1px ;
    background : #77777a ;
}
.tab-title
{
    width : 56px ;
    margin-left : 8px ;
    white-space : nowrap ;
    overflow : hidden ;
    -webkit-mask-image : linear-gradient(to right , #000 78% , transparent) ;
    mask-image : linear-gradient(to right , #000 78% , transparent) ;
}
.tab-x
{
    width : 14px ;
    height : 14px ;
    margin-left : 2px ;
    flex : none ;
    color : #e8e8e8 ;
}
.tab-on
{
    background : #f7f7f7 ;
    color : #444 ;
    border-radius : 8px 8px 0 0 ;
}
.tab-on .tab-title
{
    -webkit-mask-image : none ;
    mask-image : none ;
}
.tab-on .tab-x
{
    color : #555 ;
}
.tab-on:after
{
    display : none ;
}
.new-tab
{
    width : 46px ;
    display : flex ;
    align-items : center ;
    justify-content : center ;
}
.new-tab svg
{
    width : 15px ;
    height : 15px ;
}
.win-ctrls
{
    margin-left : auto ;
    display : flex ;
    padding-right : 3px ;
}
.win-btn
{
    width : 40px ;
    display : flex ;
    align-items : center ;
    justify-content : center ;
}
.tab-search
{
    width : 15px ;
    height : 15px ;
    border-radius : 50% ;
    background : #fff ;
    display : flex ;
    align-items : center ;
    justify-content : center ;
}
.win-min
{
    width : 9px ;
    height : 1px ;
    background : #ddd ;
    margin-top : 6px ;
}
.win-restore
{
    width : 9px ;
    height : 9px ;
}
.win-close
{
    width : 20px ;
    height : 20px ;
    border-radius : 50% ;
    background : #e8430f ;
    display : flex ;
    align-items : center ;
    justify-content : center ;
}
.win-close-x
{
    margin : 0 ;
    color : #fff ;
}

.toolbar
{
    height : 34px ;
    background : #f7f7f7 ;
    display : flex ;
    padding-left : 6px ;
    padding-top : 3px ;
    box-sizing : border-box ;
}
.tool-btn
{
    width : 32px ;
    height : 31px ;
    flex : none ;
    display : flex ;
    align-items : center ;
    justify-content : center ;
}
.tool-btn svg
{
    width : 16px ;
    height : 16px ;
}
.url-pill
{
    flex : 1 ;
    margin-left : 4px ;
    height : 31px ;
    background : #fff ;
    border-radius : 16px ;
    display : flex ;
    align-items : center ;
    padding-left : 13px ;
    padding-right : 11px ;
}
.lock
{
    width : 12px ;
    height : 14px ;
}
.url-text
{
    margin-left : 11px ;
    font-size : 14px ;
    letter-spacing : -0.3px ;
    color : #666 ;
    flex : 1 ;
}
.url-text b
{
    font-weight : 400 ;
    color : #111 ;
}
.star
{
    width : 15px ;
    height : 15px ;
}
.tool-right
{
    display : flex ;
    margin-left : 6px ;
    padding-right : 6px ;
}
.avatar
{
    width : 22px ;
    height : 22px ;
    border-radius : 50% ;
    background : #ff2d07 ;
    color : #fff ;
    font-size : 12px ;
    display : flex ;
    align-items : center ;
    justify-content : center ;
}
.kebab i
{
    width : 3px ;
    height : 3px ;
    border-radius : 50% ;
    background : #444 ;
    margin : 2px 0 ;
}

.bookmarks
{
    height : 37px ;
    background : #f7f7f7 ;
    border-bottom : 1px solid #cfcfcf ;
    box-sizing : border-box ;
    display : grid ;
    grid-template-columns : 75px 78px 32px 102px 76px 146px 151px 153px 148px 153px 152px 152px 263px 23px 1fr ;
    align-items : center ;
    padding-left : 15px ;
    padding-bottom : 2px ;
    font-size : 15px ;
    color : #444 ;
}
.bm
{
    display : flex ;
    align-items : center ;
    gap : 8px ;
    white-space : nowrap ;
}
.bm-more
{
    color : #333 ;
    font-size : 15px ;
    text-align : center ;
    border-right : 1px solid #ccc ;
}
.bm-reading
{
    padding-left : 11px ;
}

/* page inside the browser */
.page
{
    flex : 1 ;
    min-height : 0 ;
    display : flex ;
    background : #fff ;
}
.viewport
{
    flex : 1 ;
    overflow : hidden ;
}
.panel
{
    margin-left : 73px ;
    width : 1687px ;
    padding-left : 19px ;
    box-sizing : border-box ;
    height : 1400px ;
    background : #a6f9ff ;
}
.title
{
    margin : 0 ;
    padding-top : 15px ;
    height : 148px ;
    box-sizing : border-box ;
    font : bold 60px/80px "Liberation Serif" , serif ;
    text-align : center ;
    color : #000 ;
}
.rule
{
    margin : 0 ;
    border : 0 ;
    height : 1px ;
    background : #8cc6cf ;
}
.columns
{
    display : grid ;
    grid-template-columns : 417px 1fr ;
    padding-top : 24px ;
}
.new-quote
{
    margin-left : 17px ;
    width : 383px ;
    box-sizing : border-box ;
    height : 800px ;
    padding : 1px 37px 0 37px ;
    background : #6a9a9f ;
    border-radius : 5px ;
    box-shadow : 6px 5px 5px #000 , 0 0 3px rgba(0 , 0 , 0 , 0.5) ;
}
.new-quote-head
{
    margin : 0 ;
    font : 400 48px/57px "Liberation Serif" , serif ;
    text-align : center ;
    color : #212529 ;
}
.green-line
{
    width : 154px ;
    height : 3px ;
    margin-top : 24px ;
    margin-bottom : 24px ;
    background : #3a9a70 ;
}
.field-label
{
    display : block ;
    height : 36px ;
    font : bold 24px/36px "Liberation Serif" , serif ;
    color : #fff ;
}
.input-wrap
{
    position : relative ;
}
.contact-ico
{
    position : absolute ;
    right : 7px ;
    top : 18px ;
    width : 24px ;
    height : 21px ;
}
.field
{
    display : block ;
    width : 100% ;
    height : 57px ;
    box-sizing : border-box ;
    margin : 0 ;
    background : transparent ;
    border : 1px solid #c5cfd0 ;
    border-radius : 8px ;
    outline : 0 ;
}
.field-area
{
    height : 165px ;
    resize : vertical ;
}
.date-group
{
    margin-top : 30px ;
    margin-left : 30px ;
}
.date-field
{
    display : block ;
    width : 234px ;
    height : 40px ;
    box-sizing : border-box ;
    margin : 2px 0 0 0 ;
    background : #fff ;
    border : 1px solid #777 ;
    border-radius : 3px ;
}

.quotes
{
    display : flex ;
    flex-direction : column ;
    align-items : center ;
    padding-top : 1px ;
    gap : 24px ;
}
.card
{
    box-sizing : border-box ;
    background : #f0f8ff ;
    border-radius : 5px ;
    box-shadow : 6px 5px 5px #000 , 0 0 3px rgba(0 , 0 , 0 , 0.5) ;
    color : #212529 ;
}
.card-first
{
    width : 603px ;
    height : 500px ;
    margin-left : 1px ;
    padding : 26px 0 0 25px ;
}
.card-second
{
    width : 688px ;
    height : 560px ;
    margin-right : 2px ;
    padding : 27px 0 0 27px ;
}
.card-date
{
    margin : 0 ;
    font-size : 28px ;
    line-height : 34px ;
    font-weight : 600 ;
    letter-spacing : 0.5px ;
}
.topic-row
{
    display : flex ;
    margin-top : 16px ;
}
.topic
{
    margin-left : 16px ;
    margin-top : 5px ;
    font-size : 24px ;
    line-height : 29px ;
    flex : none ;
    letter-spacing : -0.45px ;
}
.topic-long
{
    width : 301px ;
}
.topic-short
{
    width : 185px ;
    margin-left : 15px ;
}
.btn-more
{
    width : 134px ;
    height : 46px ;
    padding : 0 ;
    border : 0 ;
    border-radius : 4px ;
    background : #00c9f5 ;
    color : #0a0a0a ;
    font : 21px "Noto Sans" , sans-serif ;
    letter-spacing : -0.3px ;
}
.byline
{
    display : flex ;
    justify-content : space-between ;
    align-items : center ;
    width : 538px ;
    height : 29px ;
    margin-top : 69px ;
    margin-left : 8px ;
}
.byline-name
{
    font-size : 24px ;
    font-weight : 600 ;
    letter-spacing : -0.55px ;
    margin-left : -1px ;
    margin-bottom : 5px ;
}
.byline-age
{
    font : 24px "Liberation Serif" , serif ;
}
.actions
{
    display : flex ;
    align-items : flex-start ;
    gap : 18px ;
    margin-top : 58px ;
    margin-left : 14px ;
}
.btn-act
{
    height : 51px ;
    padding : 0 0 2px 14px ;
    border : 0 ;
    border-radius : 4px ;
    color : #fff ;
    text-align : left ;
    font : 21px "Noto Sans" , sans-serif ;
    letter-spacing : -0.3px ;
}
.btn-like
{
    width : 146px ;
    background : #009454 ;
}
.btn-dislike
{
    width : 173px ;
    background : #ae0023 ;
    box-shadow : 0 0 0 6px #b9cbff ;
}
.btn-delete
{
    width : 152px ;
    height : 60px ;
    padding-top : 4px ;
    padding-bottom : 0 ;
    background : #eb003c ;
}
.quote-text
{
    margin : 44px 0 0 -8px ;
    font-size : 24px ;
    line-height : 32px ;
    white-space : nowrap ;
    letter-spacing : -0.5px ;
}
.quote-author
{
    margin : 34px 0 0 -8px ;
    font-size : 24px ;
    line-height : 32px ;
    letter-spacing : -0.45px ;
}
.quote-text-second
{
    margin-top : 58px ;
}

.scrollbar
{
    width : 15px ;
    flex : none ;
    display : flex ;
    flex-direction : column ;
    align-items : center ;
    background : #f0f0f0 ;
}
.sb-up
{
    margin-top : 5px ;
    border-left : 4px solid transparent ;
    border-right : 4px solid transparent ;
    border-bottom : 5px solid #505050 ;
}
.sb-down
{
    margin-bottom : 6px ;
    border-left : 4px solid transparent ;
    border-right : 4px solid transparent ;
    border-top : 5px solid #505050 ;
}
.sb-track
{
    flex : 1 ;
    width : 100% ;
    padding-top : 40px ;
    box-sizing : border-box ;
}
.sb-thumb
{
    height : 295px ;
    margin : 0 2px ;
    background : #bcbcbc ;
}

/* downloads shelf */
.downloads
{
    height : 61px ;
    background : #f7f7f7 ;
    border-top : 1px solid #c9c9c9 ;
    box-sizing : border-box ;
    display : flex ;
    align-items : center ;
    padding-left : 4px ;
}
.dl
{
    width : 233px ;
    height : 47px ;
    flex : none ;
    display : flex ;
    align-items : center ;
    padding-left : 16px ;
    box-sizing : border-box ;
    border-right : 1px solid #c4c4c4 ;
    font-size : 15px ;
    color : #3c4043 ;
}
.dl-name
{
    margin-left : 13px ;
    width : 142px ;
    white-space : nowrap ;
    margin-bottom : 1px ;
}
.dl-name-wide
{
    letter-spacing : 0.45px ;
}
.dl-caret
{
    width : 16px ;
    height : 16px ;
    margin-left : 14px ;
}
.show-all
{
    margin-left : auto ;
    margin-bottom : 2px ;
    width : 88px ;
    height : 34px ;
    padding : 0 ;
    background : #e8e8e8 ;
    border : 1px solid #cfcfcf ;
    border-radius : 4px ;
    color : #3c4043 ;
    font : 14px "Noto Sans" , sans-serif ;
}
.dl-close
{
    width : 14px ;
    height : 14px ;
    margin-left : 11px ;
    margin-right : 11px ;
    color : #555 ;
}
```
